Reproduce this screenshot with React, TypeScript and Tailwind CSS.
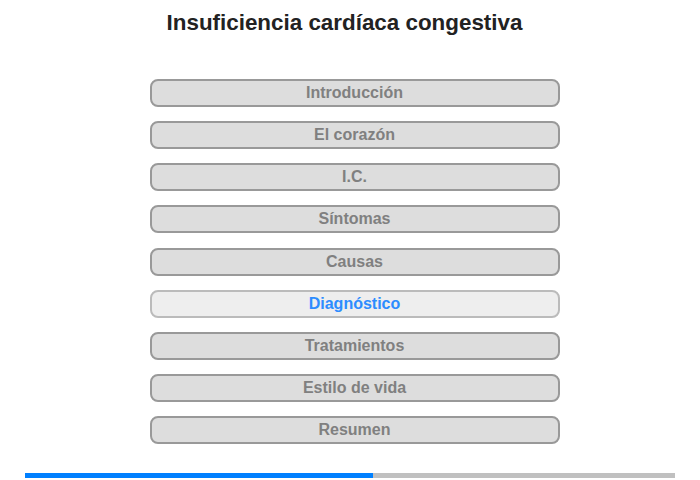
import React from "react";

const items = [
  "Introducción",
  "El corazón",
  "I.C.",
  "Síntomas",
  "Causas",
  "Diagnóstico",
  "Tratamientos",
  "Estilo de vida",
  "Resumen",
];

export default function App() {
  return (
    <div className="w-[700px] h-[480px] bg-white flex flex-col items-center font-['Liberation_Sans',Arial,sans-serif]">
      <h1 className="mt-[9px] mr-[11px] h-[28px] text-[22.4px] leading-[28px] font-bold text-[#222]">
        Insuficiencia cardíaca congestiva
      </h1>
      <div className="mt-[42px] ml-[9px] flex flex-col gap-[14.125px]">
        {items.map((t) => {
          const active = t === "Diagnóstico";
          return (
            <div
              key={t}
              className={
                active
                  ? "w-[410px] h-[28px] rounded-[8px] border-2 border-[#bbbbbb] bg-[#eeeeee] flex items-center justify-center text-[16px] font-bold text-[#2d8cff]"
                  : "w-[410px] h-[28px] rounded-[8px] border-2 border-[#999999] bg-[#dddddd] flex items-center justify-center text-[16px] font-bold text-[#808080]"
              }
            >
              {t}
            </div>
          );
        })}
      </div>
      <div className="mt-[29px] w-[650px] h-[5px] flex bg-[#c0c0c0]">
        <div className="w-[348px] h-full bg-[#0080ff]" />
      </div>
    </div>
  );
}
